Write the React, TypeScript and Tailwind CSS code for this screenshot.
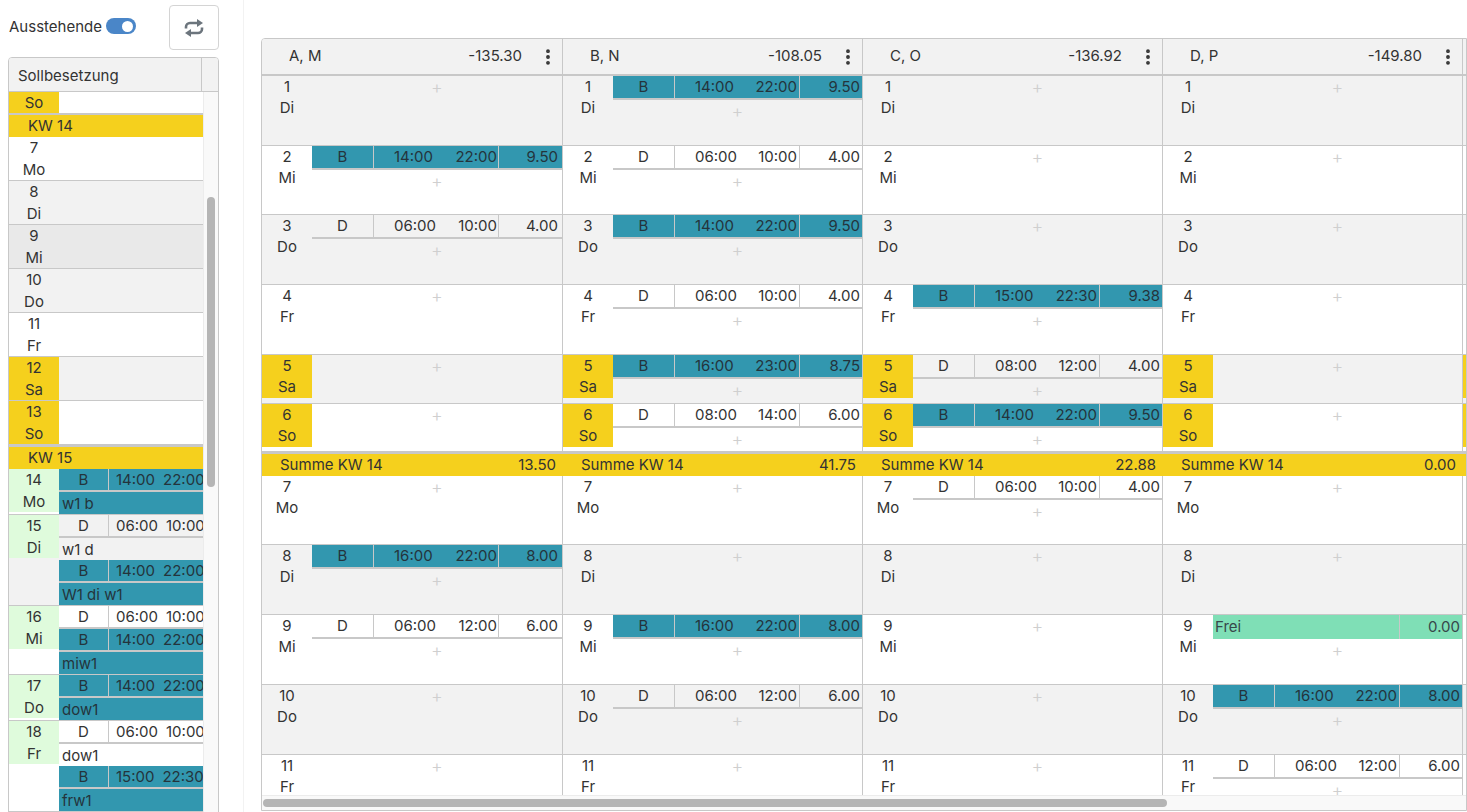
import { EllipsisVertical } from "lucide-react";

type Entry = { kind: "B" | "D" | "Frei"; from?: string; to?: string; hours: string };

const B = (from: string, to: string, hours: string): Entry => ({ kind: "B", from, to, hours });
const D = (from: string, to: string, hours: string): Entry => ({ kind: "D", from, to, hours });

const days = [
  { n: "1", d: "Di", h: "h-[70px]", gray: true },
  { n: "2", d: "Mi", h: "h-[69px]" },
  { n: "3", d: "Do", h: "h-[70px]", gray: true },
  { n: "4", d: "Fr", h: "h-[70px]" },
  { n: "5", d: "Sa", h: "h-[49px]", gray: true, weekend: true },
  { n: "6", d: "So", h: "h-[48px]", weekend: true },
  { sum: true, n: "", d: "", h: "h-[24px]" },
  { n: "7", d: "Mo", h: "h-[69px]" },
  { n: "8", d: "Di", h: "h-[70px]", gray: true },
  { n: "9", d: "Mi", h: "h-[70px]" },
  { n: "10", d: "Do", h: "h-[70px]", gray: true },
  { n: "11", d: "Fr", h: "h-[70px]" },
];

const columns: { name: string; total: string; sum: string; entries: Record<string, Entry> }[] = [
  {
    name: "A, M",
    total: "-135.30",
    sum: "13.50",
    entries: {
      "2": B("14:00", "22:00", "9.50"),
      "3": D("06:00", "10:00", "4.00"),
      "8": B("16:00", "22:00", "8.00"),
      "9": D("06:00", "12:00", "6.00"),
    },
  },
  {
    name: "B, N",
    total: "-108.05",
    sum: "41.75",
    entries: {
      "1": B("14:00", "22:00", "9.50"),
      "2": D("06:00", "10:00", "4.00"),
      "3": B("14:00", "22:00", "9.50"),
      "4": D("06:00", "10:00", "4.00"),
      "5": B("16:00", "23:00", "8.75"),
      "6": D("08:00", "14:00", "6.00"),
      "9": B("16:00", "22:00", "8.00"),
      "10": D("06:00", "12:00", "6.00"),
    },
  },
  {
    name: "C, O",
    total: "-136.92",
    sum: "22.88",
    entries: {
      "4": B("15:00", "22:30", "9.38"),
      "5": D("08:00", "12:00", "4.00"),
      "6": B("14:00", "22:00", "9.50"),
      "7": D("06:00", "10:00", "4.00"),
    },
  },
  {
    name: "D, P",
    total: "-149.80",
    sum: "0.00",
    entries: {
      "9": { kind: "Frei", hours: "0.00" },
      "10": B("16:00", "22:00", "8.00"),
      "11": D("06:00", "12:00", "6.00"),
    },
  },
  { name: "", total: "", sum: "", entries: {} },
];

const sideRows = [
  { n: "7", d: "Mo" },
  { n: "8", d: "Di", gray: true },
  { n: "9", d: "Mi", bg: "bg-[#e9e9e9]" },
  { n: "10", d: "Do", gray: true },
  { n: "11", d: "Fr" },
  { n: "12", d: "Sa", gray: true, weekend: true },
  { n: "13", d: "So", weekend: true },
];

const sideShifts = [
  { n: "14", d: "Mo", items: [{ kind: "B", from: "14:00", to: "22:00", note: "w1 b" }] },
  {
    n: "15",
    d: "Di",
    gray: true,
    items: [
      { kind: "D", from: "06:00", to: "10:00", note: "w1 d" },
      { kind: "B", from: "14:00", to: "22:00", note: "W1 di w1" },
    ],
  },
  {
    n: "16",
    d: "Mi",
    items: [
      { kind: "D", from: "06:00", to: "10:00" },
      { kind: "B", from: "14:00", to: "22:00", note: "miw1" },
    ],
  },
  { n: "17", d: "Do", items: [{ kind: "B", from: "14:00", to: "22:00", note: "dow1" }] },
  {
    n: "18",
    d: "Fr",
    items: [
      { kind: "D", from: "06:00", to: "10:00", note: "dow1" },
      { kind: "B", from: "15:00", to: "22:30", note: "frw1" },
    ],
  },
];

function SwapIcon() {
  return (
    <svg width="20" height="20" viewBox="0 0 20 20" className="text-[#6c757d]">
      <path d="M2 10.5V9a4 4 0 0 1 4-4h8" fill="none" stroke="currentColor" strokeWidth="2.6" />
      <path d="M13 1l6 4-6 4z" fill="currentColor" />
      <path d="M18 9.5V11a4 4 0 0 1-4 4H6" fill="none" stroke="currentColor" strokeWidth="2.6" />
      <path d="M7 11l-6 4 6 4z" fill="currentColor" />
    </svg>
  );
}

function EntryRow({ entry, first }: { entry: Entry; first: boolean }) {
  if (entry.kind === "Frei") {
    return (
      <div className="flex h-[24px] bg-[#7fdfb6] text-[#37474a]">
        <div className="flex-1 pl-[2px] leading-[23px]">Frei</div>
        <div className="w-[63px] border-l border-[#c8c8c8] pr-[2px] text-right leading-[23px]">{entry.hours}</div>
      </div>
    );
  }
  const teal = entry.kind === "B";
  return (
    <div className={`flex h-[24px] border-b-2 border-[#c8c8c8] leading-[22px] ${teal ? "bg-[#3297af] text-[#24343c]" : "text-[#333]"}`}>
      <div className="w-[61px] text-center">{entry.kind}</div>
      <div className={`flex w-[125px] justify-between border-l border-[#c8c8c8] pl-[20px] ${first ? "pr-[1px]" : "pr-[2px]"}`}>
        <span>{entry.from}</span>
        <span>{entry.to}</span>
      </div>
      <div className={`flex-1 border-l border-[#c8c8c8] text-right ${first ? "pr-[4px]" : "pr-[2px]"}`}>{entry.hours}</div>
    </div>
  );
}

function Column({ col, first }: { col: (typeof columns)[number]; first: boolean }) {
  return (
    <div className={`shrink-0 border-r border-[#c8c8c8] ${first ? "w-[301px]" : "w-[300px]"}`}>
      <div className="flex h-[37px] items-center border-b-2 border-[#c8c8c8] bg-[#f2f2f2] pl-[27px] pr-[4px]">
        <span className="flex-1">{col.name}</span>
        <span className="mr-[16px]">{col.total}</span>
        <EllipsisVertical size={20} strokeWidth={2.6} className="text-[#333]" />
      </div>
      {days.map((day, i) => {
        if (day.sum) {
          return (
            <div key={i} className="-mr-px flex h-[24px] border-t-2 border-[#c8c8c8] bg-[#f5d01d] pl-[18px] pr-[7px] leading-[22px] text-[#333]">
              <span className="flex-1">Summe KW 14</span>
              <span>{col.sum}</span>
            </div>
          );
        }
        const entry = col.entries[day.n];
        return (
          <div key={i} className={`flex border-b border-[#c8c8c8] ${day.h} ${day.gray ? "bg-[#f2f2f2]" : "bg-white"}`}>
            <div className={`h-[43px] w-[50px] shrink-0 text-center leading-[21px] ${day.weekend ? "bg-[#f5d01d]" : ""}`}>
              <div>{day.n}</div>
              <div>{day.d}</div>
            </div>
            <div className="min-w-0 flex-1">
              {entry && <EntryRow entry={entry} first={first} />}
              <div className="h-[24px] text-center text-[18px] font-light leading-[24px] text-[#cfcfcf]">+</div>
            </div>
          </div>
        );
      })}
    </div>
  );
}

function SideDay({ n, d, className }: { n: string; d: string; className: string }) {
  return (
    <div className={`h-[43px] w-[50px] shrink-0 text-center leading-[22px] ${className}`}>
      <div>{n}</div>
      <div>{d}</div>
    </div>
  );
}

function KwRow({ label }: { label: string }) {
  return (
    <div className="h-[24px] border-t-2 border-[#c8c8c8] bg-[#f5d01d] pl-[19px] leading-[21px]">{label}</div>
  );
}

export default function App() {
  return (
    <div className="flex h-[812px] w-[1467px] overflow-hidden bg-white font-['Inter',sans-serif] text-[15px] text-[#333]">
      <aside className="w-[244px] shrink-0 border-r border-[#f2f2f2] pl-[8px] pr-[24px]">
        <div className="flex h-[57px] items-start">
          <span className="ml-px mt-[16px] leading-[22px]">Ausstehende</span>
          <span className="ml-[4px] mt-[18px] flex h-[16px] w-[30px] items-center justify-end rounded-full bg-[#4a86c8] pr-[3px]">
            <span className="size-[11px] rounded-full bg-white" />
          </span>
          <button className="ml-auto mt-[5px] flex h-[45px] w-[50px] items-center justify-center rounded border border-[#d4d4d4] bg-white">
            <SwapIcon />
          </button>
        </div>
        <div className="relative h-[770px] overflow-hidden rounded-t border border-[#c8c8c8]">
          <div className="flex h-[34px] border-b border-[#c8c8c8] bg-[#f2f2f2]">
            <div className="w-[193px] border-r border-[#c8c8c8] pl-[9px] leading-[35px]">Sollbesetzung</div>
          </div>
          <div className="w-[194px]">
            <div className="h-[21px]">
              <div className="h-[21px] w-[50px] bg-[#f5d01d] text-center leading-[21px]">So</div>
            </div>
            <KwRow label="KW 14" />
            {sideRows.map((row) => (
              <div key={row.n} className={`h-[44px] border-b border-[#c8c8c8] ${row.bg ?? (row.gray ? "bg-[#f2f2f2]" : "bg-white")}`}>
                <SideDay n={row.n} d={row.d} className={row.weekend ? "bg-[#f5d01d]" : ""} />
              </div>
            ))}
            <KwRow label="KW 15" />
            {sideShifts.map((row) => (
              <div key={row.n} className={`flex border-b border-[#c8c8c8] ${row.gray ? "bg-[#f2f2f2]" : "bg-white"}`}>
                <SideDay n={row.n} d={row.d} className="bg-[#dffbdc]" />
                <div className="min-w-0 flex-1 overflow-hidden">
                  {row.items.map((item, i) => {
                    const teal = item.kind === "B";
                    const tone = teal ? "bg-[#3297af] text-[#24343c]" : "";
                    return (
                      <div key={i}>
                        <div className={`flex h-[23px] border-b-2 border-[#c8c8c8] leading-[21px] ${tone}`}>
                          <div className="w-[49px] shrink-0 text-center">{item.kind}</div>
                          <div className="flex shrink-0 gap-[8px] whitespace-nowrap border-l border-[#c8c8c8] pl-[7px]">
                            <span>{item.from}</span>
                            <span>{item.to}</span>
                          </div>
                        </div>
                        {item.note && <div className={`h-[22px] pl-[3px] leading-[24px] ${tone}`}>{item.note}</div>}
                      </div>
                    );
                  })}
                </div>
              </div>
            ))}
          </div>
          <div className="absolute bottom-0 right-0 top-[34px] w-[15px] border-l border-[#ececec] bg-[#f9f9f9]" />
          <div className="absolute right-[3px] top-[139px] h-[290px] w-[8px] rounded-full bg-[#b5b5b5]" />
        </div>
      </aside>
      <main className="min-w-0 flex-1 pl-[17px] pt-[38px]">
        <div className="relative h-[773px] overflow-hidden rounded-tl border border-[#c8c8c8]">
          <div className="flex">
            {columns.map((col, i) => (
              <Column key={i} col={col} first={i === 0} />
            ))}
          </div>
          <div className="absolute bottom-0 left-0 right-0 h-[15px] border-t border-[#ececec] bg-[#f9f9f9]" />
          <div className="absolute bottom-[3px] left-[1px] h-[8px] w-[904px] rounded-full bg-[#b5b5b5]" />
        </div>
      </main>
    </div>
  );
}
